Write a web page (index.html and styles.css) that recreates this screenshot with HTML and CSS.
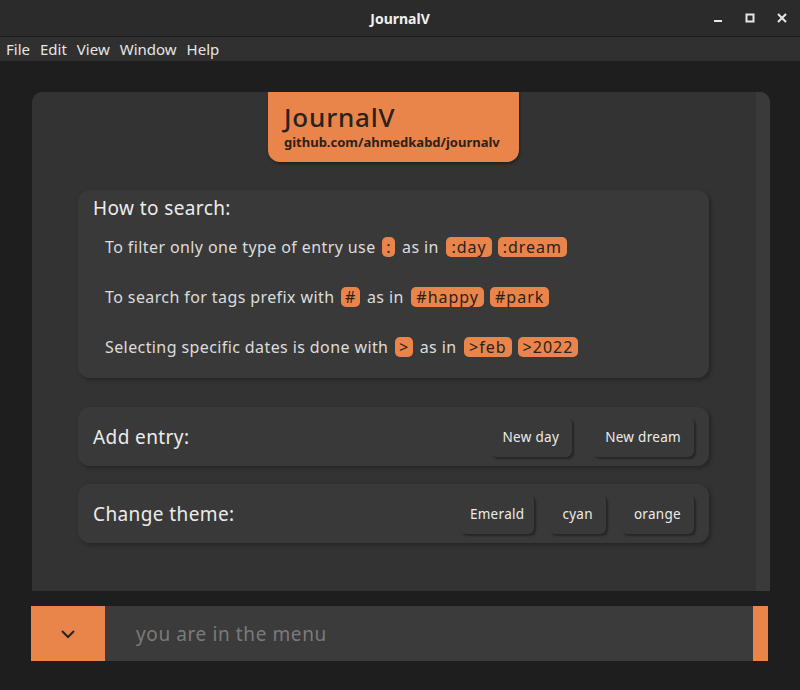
FILE: index.html
```html
<!DOCTYPE html>
<html>
<head>
<meta charset="utf-8">
<link rel="stylesheet" href="styles.css">
</head>
<body>
<div class="titlebar">
  <div class="title">JournalV</div>
  <div class="wincontrols">
    <svg class="wbtn" width="12" height="12" viewBox="0 0 12 12"><rect x="2" y="8" width="8" height="2" fill="#e8e8e8"/></svg>
    <svg class="wbtn" width="12" height="12" viewBox="0 0 12 12"><rect x="2.5" y="2.5" width="7" height="7" fill="none" stroke="#e8e8e8" stroke-width="2"/></svg>
    <svg class="wbtn" width="12" height="12" viewBox="0 0 12 12"><path d="M2 2 L10 10 M10 2 L2 10" stroke="#e8e8e8" stroke-width="2"/></svg>
  </div>
</div>
<div class="menubar">
  <span>File</span><span>Edit</span><span>View</span><span>Window</span><span>Help</span>
</div>
<div class="app">
  <div class="panel">
    <div class="content">
      <div class="header">
        <div class="h-title">JournalV</div>
        <div class="h-sub">github.com/ahmedkabd/journalv</div>
      </div>
      <div class="card search">
        <div class="card-title">How to search:</div>
        <div class="line">To filter only one type of entry use <span class="tag key">:</span> as in <span class="tag">:day</span><span class="tag">:dream</span></div>
        <div class="line">To search for tags prefix with <span class="tag key">#</span> as in <span class="tag">#happy</span><span class="tag">#park</span></div>
        <div class="line">Selecting specific dates is done with <span class="tag key">&gt;</span> as in <span class="tag">&gt;feb</span><span class="tag">&gt;2022</span></div>
      </div>
      <div class="card row add">
        <div class="card-title">Add entry:</div>
        <div class="buttons">
          <div class="btn">New day</div>
          <div class="btn">New dream</div>
        </div>
      </div>
      <div class="card row theme">
        <div class="card-title">Change theme:</div>
        <div class="buttons">
          <div class="btn">Emerald</div>
          <div class="btn">cyan</div>
          <div class="btn">orange</div>
        </div>
      </div>
    </div>
    <div class="scrolltrack"></div>
  </div>
  <div class="bottombar">
    <div class="toggle">
      <svg width="16" height="10" viewBox="0 0 16 10"><path d="M2 2 L8 8 L14 2" fill="none" stroke="#2a2420" stroke-width="2"/></svg>
    </div>
    <div class="input">you are in the menu</div>
    <div class="endcap"></div>
  </div>
</div>
</body>
</html>
```
FILE: styles.css
```css
* { box-sizing: border-box; }
html, body { margin: 0; padding: 0; }
body {
  width: 800px;
  height: 690px;
  background: #1f1e1f;
  font-family: "Noto Sans", sans-serif;
  overflow: hidden;
  display: flex;
  flex-direction: column;
}
.titlebar {
  height: 37px;
  background: #2b2b2b;
  border-bottom: 1px solid #1b1b1b;
  display: flex;
  align-items: center;
  justify-content: center;
  position: relative;
}
.title {
  color: #f0f0f0;
  font-family: "Noto Sans", sans-serif;
  font-weight: 700;
  font-size: 14px;
}
.wincontrols {
  position: absolute;
  right: 12px;
  top: 12px;
  display: flex;
  gap: 20px;
}
.menubar {
  height: 24px;
  background: #303030;
  display: flex;
  align-items: center;
  padding-left: 6px;
  gap: 10px;
  color: #e6e6e6;
  font-family: "Noto Sans", sans-serif;
  font-size: 15px;
}
.app {
  flex: 1;
  display: flex;
  flex-direction: column;
  padding: 31px 31px 0 31px;
}
.panel {
  width: 738px;
  height: 499px;
  margin-left: 1px;
  display: flex;
  border-radius: 10px 10px 0 0;
  overflow: hidden;
  background: #333333;
}
.content {
  flex: 1;
  display: flex;
  flex-direction: column;
  align-items: center;
  padding: 0 47px 0 46px;
}
.scrolltrack {
  width: 14px;
  background: #3a3a3a;
}
.header {
  width: 251px;
  height: 70px;
  background: #e9854a;
  border-radius: 0 0 12px 12px;
  padding: 10px 0 0 16px;
  color: #2a221d;
  box-shadow: 1px 2px 3px rgba(0,0,0,0.35);
}
.h-title {
  font-size: 26px;
  line-height: 31px;
  font-weight: 500;
  letter-spacing: 0.8px;
}
.h-sub {
  font-size: 13px;
  line-height: 18px;
  font-weight: 700;
}
.card {
  width: 100%;
  background: #393939;
  border-radius: 12px;
  box-shadow: 2px 2px 4px rgba(0,0,0,0.3);
  color: #e4e4e4;
}
.card-title {
  font-size: 19px;
  color: #ececec;
  letter-spacing: 0.4px;
}
.search {
  margin-top: 28px;
  height: 188px;
  padding: 5px 15px 0 15px;
}
.search .card-title {
  line-height: 26px;
}
.line {
  padding-left: 12px;
  font-size: 16px;
  line-height: 24px;
  margin-top: 26px;
  color: #dcdcdc;
  letter-spacing: 0.4px;
}
.search .card-title + .line { margin-top: 14px; }
.tag {
  background: #e9854a;
  color: #2a221d;
  border-radius: 5px;
  padding: 0 5px;
  margin: 0 3px 0 3px;
  display: inline-block;
  line-height: 20px;
  letter-spacing: 1px;
}
.tag.key {
  padding: 0 4px;
  margin: 0 2px;
}
.row {
  display: flex;
  align-items: center;
  justify-content: space-between;
  height: 59px;
  padding: 0 15px;
}
.add { margin-top: 29px; }
.theme { margin-top: 18px; }
.buttons {
  display: flex;
  gap: 20px;
}
.theme .buttons { gap: 15px; }
.btn {
  height: 40px;
  padding: 0 13px;
  display: flex;
  align-items: center;
  font-size: 13.5px;
  letter-spacing: 0.3px;
  color: #ececec;
  background: #393939;
  border-radius: 6px;
  box-shadow: 2px 2px 2px rgba(0,0,0,0.35);
}
.theme .btn:first-child { padding: 0 10px; }
.bottombar {
  margin-top: 15px;
  height: 55px;
  width: 737px;
  display: flex;
}
.toggle {
  width: 74px;
  background: #e9854a;
  display: flex;
  align-items: center;
  justify-content: center;
}
.input {
  flex: 1;
  background: #3b3b3b;
  color: #7a7a7a;
  font-size: 19px;
  letter-spacing: 0.6px;
  display: flex;
  align-items: center;
  padding-left: 31px;
}
.endcap {
  width: 15px;
  background: #e9854a;
}
```
